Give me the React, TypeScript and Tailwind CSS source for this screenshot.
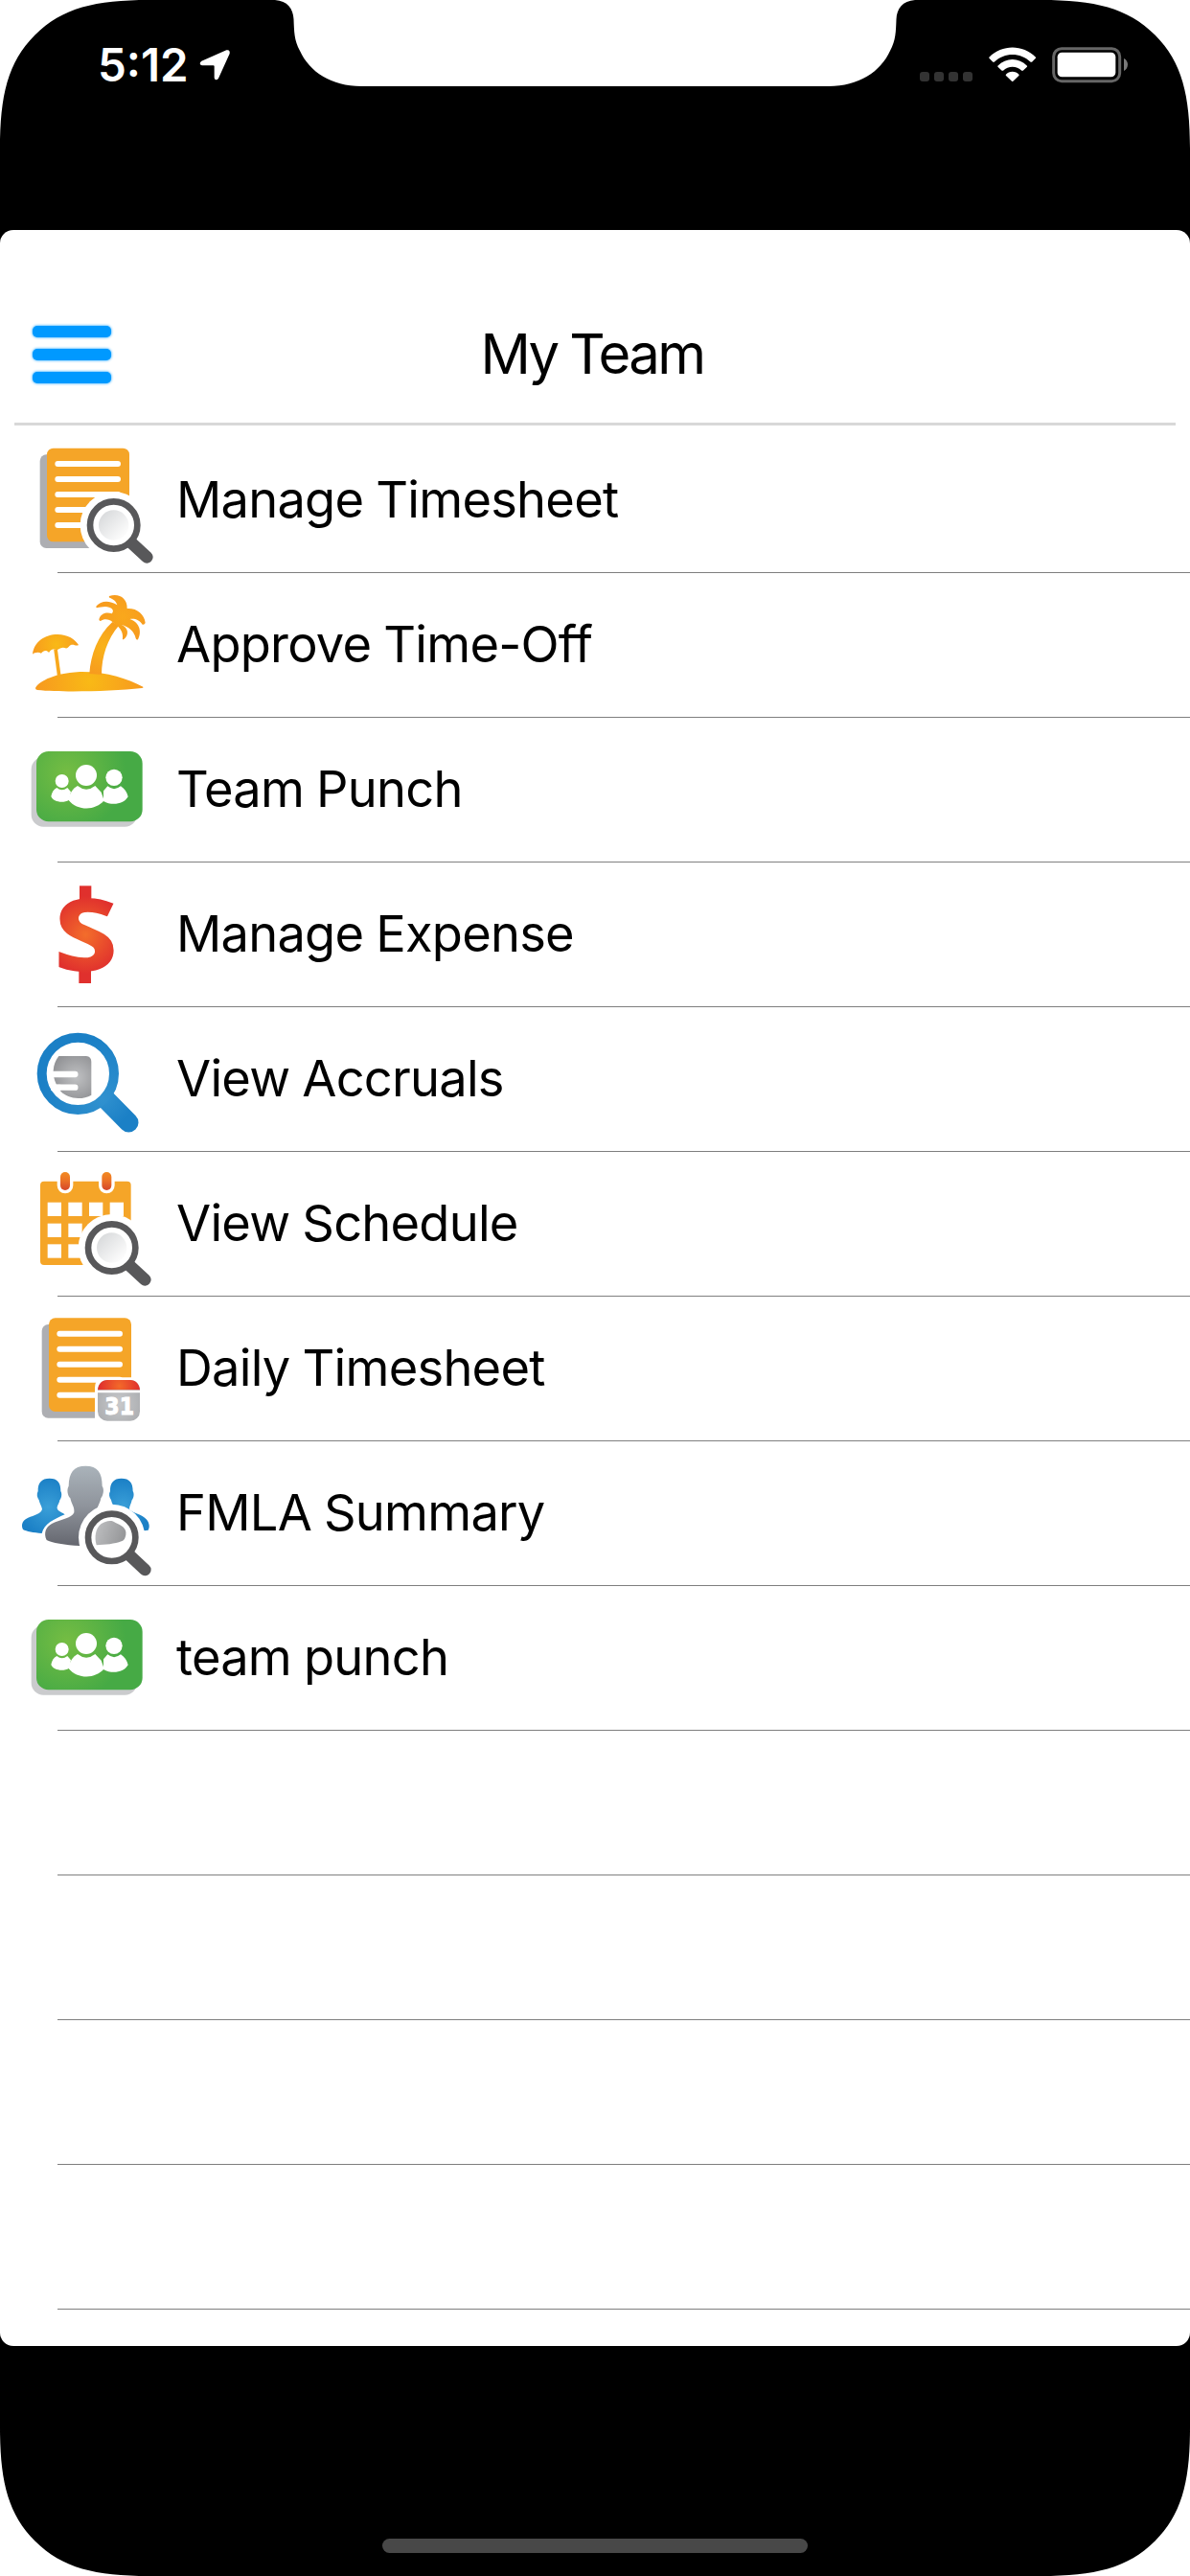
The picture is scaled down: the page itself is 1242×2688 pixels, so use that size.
import type { ReactNode } from "react";

type MenuItem = {
  label: string;
  icon: ReactNode;
};

function Magnifier({ x, y }: { x: number; y: number }) {
  return (
    <g transform={`translate(${x} ${y})`}>
      <circle r="105" fill="#fff" />
      <path d="M56 56L104 100" stroke="#58585a" strokeWidth="38" strokeLinecap="round" />
      <circle r="74" fill="#fff" stroke="#58585a" strokeWidth="20" />
      <circle r="47" fill="url(#lens)" />
    </g>
  );
}

function Sheet({ x, y }: { x: number; y: number }) {
  return (
    <g transform={`translate(${x} ${y})`}>
      <rect x="-22" y="20" width="256" height="293" rx="20" fill="#adaeb2" />
      <rect width="258" height="293" rx="20" fill="#f5a528" />
      {[49, 97, 145, 193, 241].map((line) => (
        <path
          key={line}
          d={`M34 ${line}H222`}
          stroke="#fff"
          strokeWidth="18"
          strokeLinecap="round"
        />
      ))}
    </g>
  );
}

function ManageTimesheetIcon() {
  return (
    <IconFrame top={-9}>
      <Sheet x={147} y={53} />
      <Magnifier x={356} y={294} />
    </IconFrame>
  );
}

function TimeOffIcon() {
  return (
    <IconFrame top={-6}>
      <path
        d="M111 354C118 338 160 308 250 303C335 302 400 325 448 350Q450 354 444 354C350 364 200 368 117 360Q110 359 111 354Z"
        fill="url(#sand)"
      />
      <path
        d="M102 248C106 210 140 186 180 186C212 186 236 202 246 219C238 224 232 216 222 219C216 221 212 233 205 229C196 224 188 230 180 234C172 230 160 231 153 243C146 235 137 235 129 245C120 240 108 243 102 248Z"
        fill="url(#shade)"
      />
      <path d="M174 232L185 314" stroke="#f8a81c" strokeWidth="11" />
      <path
        d="M280 309C284 250 306 188 352 147L372 158C336 200 318 255 318 312Z"
        fill="url(#trunk)"
      />
      <path
        d="M342 66C372 56 399 72 398 105C428 103 452 122 455 150Q452 157 446 155C436 139 420 135 406 138C432 146 447 172 432 202Q427 204 425 198C420 176 403 162 380 156C403 165 405 188 387 202Q382 203 384 196C386 180 376 164 362 155L352 147C342 138 326 136 315 144Q308 143 311 136C318 119 335 116 350 121C358 112 352 104 342 101C329 97 315 101 303 103Q299 101 302 97C315 80 343 78 367 94C364 82 354 75 343 71Q340 69 342 66Z"
        fill="url(#palm)"
      />
    </IconFrame>
  );
}

function TeamPunchIcon() {
  return (
    <IconFrame top={-3}>
      <rect x="98" y="120" width="331" height="218" rx="38" fill="#cacbcd" />
      <rect x="114" y="102" width="332" height="220" rx="38" fill="url(#green)" />
      <g fill="#fff">
        <circle cx="194" cy="195" r="21" />
        <circle cx="270" cy="177" r="33" />
        <circle cx="357" cy="184" r="26" />
        <path d="M160 243C162 231 168 221 178 216Q194 230 211 216L222 229L216 254C198 266 166 260 160 243Z" />
        <path d="M324 226L337 211Q357 228 378 211C390 219 398 230 401 244C386 270 348 272 324 258Z" />
        <path d="M214 254C218 234 227 219 243 210Q270 232 298 210L317 230L326 256C298 289 243 289 214 254Z" />
      </g>
    </IconFrame>
  );
}

function ExpenseIcon() {
  return (
    <IconFrame top={0}>
      <g fill="url(#money)">
        <rect x="249" y="73" width="37" height="44" />
        <rect x="247" y="332" width="38" height="46" />
        <text
          x="171"
          y="337"
          stroke="url(#money)"
          strokeWidth="5"
          fontFamily="'Open Sans', sans-serif"
          fontSize="308"
          fontWeight="700"
          textLength="196"
          lengthAdjust="spacingAndGlyphs"
        >
          S
        </text>
      </g>
    </IconFrame>
  );
}

function AccrualsIcon() {
  return (
    <IconFrame top={3}>
      <path d="M330 290L403 364" stroke="url(#handle)" strokeWidth="61" strokeLinecap="round" />
      <circle cx="244" cy="211" r="113" fill="#fff" stroke="url(#ring)" strokeWidth="30" />
      <path
        d="M184 156H270Q286 158 286 174V278Q268 288 245 288C222 287 204 280 190 266L176 244C168 228 167 213 167 202C168 184 173 170 184 156Z"
        fill="url(#coin)"
      />
      <path d="M164 213H235M176 254H235" stroke="#fff" strokeWidth="19" strokeLinecap="round" />
      <path d="M160 204H190V222H160ZM160 245H190V264H160Z" fill="#fff" />
    </IconFrame>
  );
}

function ScheduleIcon() {
  return (
    <IconFrame top={6}>
      <rect x="126" y="98" width="284" height="262" rx="12" fill="#f5a528" />
      {[164, 230, 295].map((y) =>
        [149, 214, 279, 344].map((x) => (
          <rect key={`${x}-${y}`} x={x} y={y} width="43" height="43" fill="#fff" />
        )),
      )}
      {[204, 334].map((x) => (
        <g key={x}>
          <rect x={x - 25} y="60" width="50" height="76" rx="25" fill="#fff" />
          <rect x={x - 15} y="69" width="30" height="57" rx="15" fill="url(#peg)" />
        </g>
      ))}
      <Magnifier x={350} y={306} />
    </IconFrame>
  );
}

function DailyTimesheetIcon() {
  return (
    <IconFrame top={9}>
      <Sheet x={153} y={76} />
      <path d="M297 400V294Q298 262 330 262H450V400Z" fill="#fff" />
      <rect x="306" y="270" width="132" height="128" rx="30" fill="url(#badge)" />
      <path d="M306 301C308 282 320 270 336 270H408C424 270 436 282 438 301Z" fill="url(#badgeTop)" />
      <path d="M304 306H440" stroke="#fff" strokeWidth="7" />
      <text
        x="328"
        y="378"
        fill="#fff"
        stroke="#fff"
        strokeWidth="3"
        fontFamily="'DejaVu Sans', sans-serif"
        fontSize="76"
        fontWeight="700"
        textLength="92"
        lengthAdjust="spacingAndGlyphs"
      >
        31
      </text>
    </IconFrame>
  );
}

function FmlaIcon() {
  return (
    <IconFrame top={12}>
      <path
        d="M155 128C181 128 190 142 190 168C196 178 191 192 187 196C185 208 178 214 179 222C182 232 198 236 203 241C170 255 138 270 131 300C105 298 82 294 72 288C64 270 73 258 88 251C106 243 130 238 132 224C130 214 124 206 122 196C116 188 114 176 119 168C118 142 130 128 155 128Z"
        fill="url(#blueLeft)"
      />
      <path
        d="M380 128C406 128 416 142 416 168C422 178 417 192 413 196C411 208 404 216 405 226C418 238 444 240 458 256C469 268 469 282 464 290L452 292L345 240L357 222C355 212 350 206 348 196C342 188 340 176 345 168C344 142 356 128 380 128Z"
        fill="url(#blueRight)"
      />
      <path
        d="M268 89C306 89 320 110 320 152C328 164 322 182 316 190C313 208 303 218 303 232C305 246 330 252 340 260L250 339C205 337 160 330 146 321C136 300 143 280 162 270C185 258 226 252 232 235C234 216 224 210 220 190C212 182 208 164 215 152C216 110 230 89 268 89Z"
        fill="url(#person)"
      />
      <circle cx="350" cy="313" r="104" fill="#fff" />
      <path d="M406 369L454 414" stroke="#58585a" strokeWidth="38" strokeLinecap="round" />
      <circle cx="350" cy="313" r="74" fill="#fff" stroke="#58585a" strokeWidth="20" />
      <path
        d="M302 337C295 312 299 285 316 271C330 261 350 256 362 267C379 275 398 283 394 305C391 318 388 322 380 325C360 333 330 336 302 337Z"
        fill="url(#shoulder)"
      />
    </IconFrame>
  );
}

function IconFrame({ top, children }: { top: number; children: ReactNode }) {
  return (
    <svg
      className="h-[150px] w-[180px] shrink-0 overflow-visible"
      viewBox={`0 ${top} 540 450`}
      aria-hidden="true"
    >
      {children}
    </svg>
  );
}

function Radial({
  id,
  c,
  from,
  to,
}: {
  id: string;
  c: [number, number, number];
  from: string;
  to: string;
}) {
  return (
    <radialGradient id={id} gradientUnits="userSpaceOnUse" cx={c[0]} cy={c[1]} r={c[2]}>
      <stop stopColor={from} />
      <stop offset="1" stopColor={to} />
    </radialGradient>
  );
}

// Shared gradients, in the same units as the icon frames.
function Gradients() {
  return (
    <svg className="absolute h-0 w-0" aria-hidden="true">
      <defs>
        <linearGradient id="lens" x1="0" y1="0" x2="1" y2="1">
          <stop stopColor="#d3d5d7" />
          <stop offset="0.8" stopColor="#fafafa" />
          <stop offset="1" stopColor="#fff" />
        </linearGradient>
        <linearGradient id="peg" x1="0" y1="0" x2="0" y2="1">
          <stop stopColor="#f28a22" />
          <stop offset="0.45" stopColor="#ec7326" />
          <stop offset="1" stopColor="#d4462a" />
        </linearGradient>
        <linearGradient id="person" x1="0" y1="0" x2="0" y2="1">
          <stop stopColor="#aab3ba" />
          <stop offset="0.5" stopColor="#8f949c" />
          <stop offset="1" stopColor="#65676f" />
        </linearGradient>
        <linearGradient id="shoulder" x1="0" y1="0" x2="1" y2="0.3">
          <stop stopColor="#c0c1c3" />
          <stop offset="1" stopColor="#98999b" />
        </linearGradient>
        <Radial id="sand" c={[280, 335, 160]} from="#f9b916" to="#f79b1e" />
        <Radial id="shade" c={[176, 218, 75]} from="#f9b916" to="#f79b1e" />
        <Radial id="trunk" c={[325, 225, 90]} from="#f9b31a" to="#f79b1e" />
        <Radial id="palm" c={[385, 130, 80]} from="#f9a81c" to="#f79b1e" />
        <Radial id="green" c={[210, 170, 185]} from="#75bd43" to="#46aa45" />
        <Radial id="money" c={[268, 226, 122]} from="#f36d2b" to="#e0302d" />
        <Radial id="badgeTop" c={[374, 289, 62]} from="#f36a29" to="#e0302d" />
        <Radial id="ring" c={[320, 290, 190]} from="#3091cf" to="#1b80c6" />
        <Radial id="handle" c={[325, 285, 95]} from="#3091cf" to="#1b80c6" />
        <Radial id="coin" c={[238, 222, 78]} from="#c0c1c3" to="#929396" />
        <Radial id="badge" c={[372, 345, 85]} from="#c8c9cb" to="#a9abae" />
        <Radial id="blueLeft" c={[150, 218, 90]} from="#3a9fd8" to="#1b80c6" />
        <Radial id="blueRight" c={[385, 215, 85]} from="#3a9fd8" to="#1b80c6" />
      </defs>
    </svg>
  );
}

const items: MenuItem[] = [
  { label: "Manage Timesheet", icon: <ManageTimesheetIcon /> },
  { label: "Approve Time-Off", icon: <TimeOffIcon /> },
  { label: "Team Punch", icon: <TeamPunchIcon /> },
  { label: "Manage Expense", icon: <ExpenseIcon /> },
  { label: "View Accruals", icon: <AccrualsIcon /> },
  { label: "View Schedule", icon: <ScheduleIcon /> },
  { label: "Daily Timesheet", icon: <DailyTimesheetIcon /> },
  { label: "FMLA Summary", icon: <FmlaIcon /> },
  { label: "team punch", icon: <TeamPunchIcon /> },
];

const emptyRows = [0, 1, 2, 3];

function StatusBar() {
  return (
    <div className="flex h-[240px] items-start justify-between pt-10 pr-[62px] pl-[102px] text-white">
      <div className="flex items-start">
        <span className="w-[106px] text-[47.5px] leading-[56px] font-semibold whitespace-nowrap">
          5:12
        </span>
        <svg className="h-[50px] w-9" viewBox="624 120 108 150" aria-hidden="true">
          <path
            d="M631 191L709 157Q721 154 719 168L684 245Q681 250 676 250Q671 249 671 243V208Q671 205 668 205H633Q627 205 626 199Q626 194 631 191Z"
            fill="#fff"
          />
        </svg>
      </div>
      <svg className="h-[50px] w-[220px]" viewBox="240 120 660 150" aria-hidden="true">
        {[240, 285, 330, 375].map((x) => (
          <rect key={x} x={x} y="225" width="30" height="30" rx="9" fill="#333" />
        ))}
        <g fill="#fff">
          <path d="M457 179C498 138 562 138 603 179Q604 181 602 183L591 194Q589 195 587 194C554 163 506 163 473 194Q471 195 469 194L458 183Q456 181 457 179Z" />
          <path d="M484 206C510 179 550 179 576 206Q577 208 575 210L563 221Q561 222 559 221C543 205 517 205 501 221Q499 222 497 221L485 210Q483 208 484 206Z" />
          <path d="M509 234C520 221 540 221 551 234Q551 236 550 237L532 254Q530 256 528 254L510 237Q509 236 509 234Z" />
        </g>
        <rect x="659" y="152" width="207" height="102" rx="25" fill="none" stroke="#666" strokeWidth="9" />
        <rect x="671" y="164" width="182" height="77" rx="14" fill="#fff" />
        <path d="M879 183C895 190 895 214 879 222Z" fill="#7a7a7a" />
      </svg>
    </div>
  );
}

// Rounded device corners and the notch, laid over the screen.
function DeviceMask() {
  const corner = "M0 0V155C0 100 8 65 36.5 36.5C65 8 100 0 155 0Z";
  return (
    <svg
      className="pointer-events-none absolute inset-0 h-full w-full"
      viewBox="0 0 1242 2688"
      fill="#fff"
      aria-hidden="true"
    >
      <path d={corner} />
      <path d={corner} transform="translate(1242 0) scale(-1 1)" />
      <path d={corner} transform="translate(0 2688) scale(1 -1)" />
      <path d={corner} transform="translate(1242 2688) scale(-1 -1)" />
      <path d="M287 0C300 1 306 9 306.5 20C307 33 307 42 313 53C323 75 346 90 377 90H865C896 90 919 75 929 53C935 42 935 33 935.5 20C936 9 942 1 955 0Z" />
    </svg>
  );
}

export default function App() {
  return (
    <div className="relative flex h-[2688px] w-[1242px] flex-col overflow-hidden bg-black font-['Inter',sans-serif] text-black">
      <Gradients />
      <StatusBar />

      <main className="flex h-[2208px] flex-col overflow-hidden rounded-[14px] bg-white">
        <header className="mx-[15px] grid h-[204px] shrink-0 grid-cols-[1fr_auto_1fr] border-b-[3px] border-[#d8d8d8] pt-[59px]">
          <button
            type="button"
            aria-label="Menu"
            className="mt-[41px] ml-[19px] flex h-[60px] w-[82px] flex-col justify-between"
          >
            <span className="h-3 w-full rounded-[5px] bg-[#0099ff] shadow-[0_0_3px_#0099ff]" />
            <span className="h-3 w-full rounded-[5px] bg-[#0099ff] shadow-[0_0_3px_#0099ff]" />
            <span className="h-3 w-full rounded-[5px] bg-[#0099ff] shadow-[0_0_3px_#0099ff]" />
          </button>
          <h1 className="mt-[35px] -ml-1.5 text-[58px] leading-[70px] tracking-[-2.6px] [word-spacing:-1px]">
            My Team
          </h1>
        </header>

        <ul className="mt-[3px]">
          {items.map((item, index) => (
            <li key={index} className="flex h-[151px] flex-col">
              <div className="flex h-[150px] items-center">
                {item.icon}
                <span className="mb-[3px] ml-1 text-[52.4px] leading-[64px] tracking-[-0.75px] whitespace-nowrap [word-spacing:-1px]">
                  {item.label}
                </span>
              </div>
              <div className="ml-[60px] h-px shrink-0 bg-[#7f7f7f]" />
            </li>
          ))}
          {emptyRows.map((row) => (
            <li key={row} className="flex h-[151px] flex-col justify-end">
              <div className="ml-[60px] h-px bg-[#7f7f7f]" />
            </li>
          ))}
        </ul>
      </main>

      <div className="mx-auto mt-[201px] h-[15px] w-[444px] rounded-full bg-[#484848]" />
      <DeviceMask />
    </div>
  );
}
